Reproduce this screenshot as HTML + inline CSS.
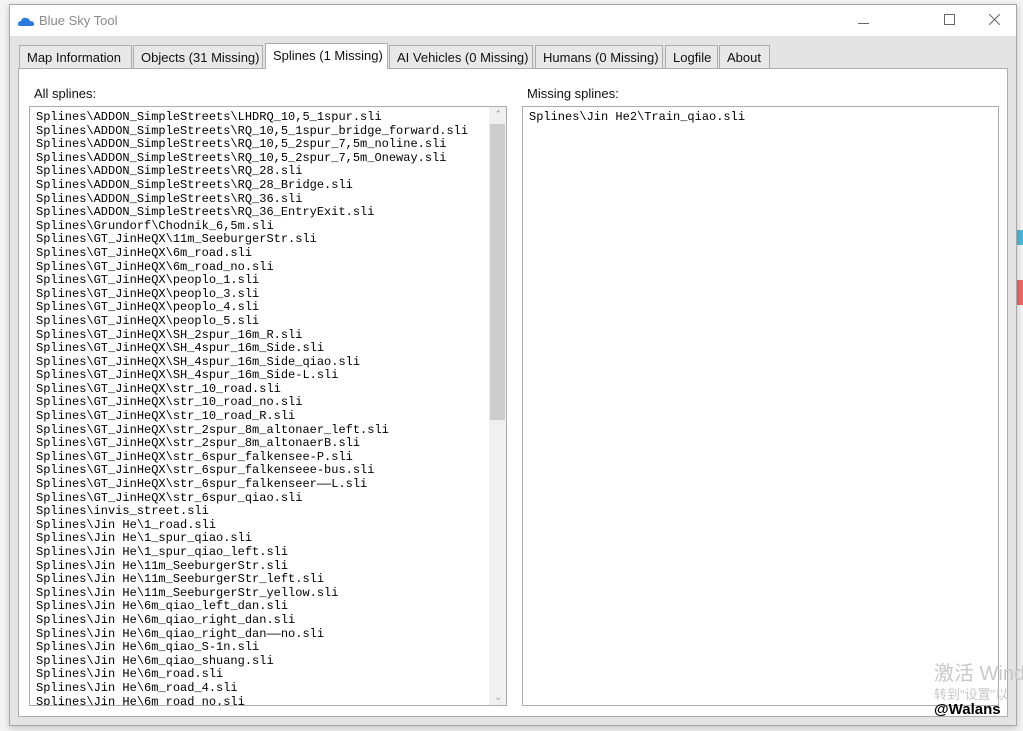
<!DOCTYPE html><html><head><style>
body{margin:0;width:1023px;height:731px;background:#f3f3f3;position:relative;overflow:hidden;font-family:"Liberation Sans","Noto Sans CJK SC",sans-serif}
.win{position:absolute;left:9px;top:4px;width:1006px;height:720px;border:1px solid #a8a8a8;background:#e4e4e4;box-shadow:0 2px 6px rgba(0,0,0,.2)}
.title{position:absolute;left:0;top:0;right:0;height:31px;background:#fff}
.title span{position:absolute;left:29px;top:8px;font-size:13px;color:#8a8a8a}
.tab{position:absolute;top:40px;height:23px;border:1px solid #adadad;border-bottom:none;background:#e8e8e8;font-size:13px;color:#111;box-sizing:border-box;padding:4px 0 0 7px;white-space:nowrap}
.tab.sel{background:#fff;top:38px;height:26px;padding-top:4px;z-index:2}
.panel{position:absolute;left:8px;top:63px;width:990px;height:649px;background:#fff;border:1px solid #adadad;box-sizing:border-box}
.lbl{position:absolute;font-size:13px;color:#111}
.box{position:absolute;border:1px solid #adadad;background:#fff;overflow:hidden;box-sizing:border-box}
.list{font-family:"Liberation Mono",monospace;font-size:12px;line-height:13.6px;color:#000;padding:4px 0 0 6px;white-space:pre}
.wm{position:absolute;white-space:nowrap;color:#c8c8c8}
</style></head><body>
<div style="position:absolute;left:1016px;top:230px;width:7px;height:15px;background:#4ab8d8"></div>
<div style="position:absolute;left:1016px;top:280px;width:7px;height:25px;background:#e66"></div>
<div class="win">
<div class="title"><svg style="position:absolute;left:8px;top:12px" width="16" height="10"><path d="M2 9 Q0 9 0 7 Q0 4 3 4 Q4 0 8 1 Q11 1 12 4 Q16 4 16 7 Q16 9 14 9Z" fill="#2a7be0"/></svg><span>Blue Sky Tool</span>
<div style="position:absolute;left:848px;top:18px;width:11px;height:1px;background:#666"></div>
<div style="position:absolute;left:934px;top:9px;width:9px;height:9px;border:1px solid #666"></div>
<svg style="position:absolute;left:979px;top:9px" width="11" height="11"><path d="M0 0L11 11M11 0L0 11" stroke="#666"/></svg></div>
<div class="tab" style="left:9px;width:113px">Map Information</div>
<div class="tab" style="left:123px;width:130px">Objects (31 Missing)</div>
<div class="tab sel" style="left:255px;width:123px">Splines (1 Missing)</div>
<div class="tab" style="left:379px;width:144px">AI Vehicles (0 Missing)</div>
<div class="tab" style="left:525px;width:128px">Humans (0 Missing)</div>
<div class="tab" style="left:655px;width:53px">Logfile</div>
<div class="tab" style="left:709px;width:51px">About</div>
<div class="panel">
<div class="lbl" style="left:15px;top:17px">All splines:</div>
<div class="lbl" style="left:508px;top:17px">Missing splines:</div>
<div class="box" style="left:10px;top:37px;width:478px;height:600px">
<div class="list">Splines\ADDON_SimpleStreets\LHDRQ_10,5_1spur.sli
Splines\ADDON_SimpleStreets\RQ_10,5_1spur_bridge_forward.sli
Splines\ADDON_SimpleStreets\RQ_10,5_2spur_7,5m_noline.sli
Splines\ADDON_SimpleStreets\RQ_10,5_2spur_7,5m_Oneway.sli
Splines\ADDON_SimpleStreets\RQ_28.sli
Splines\ADDON_SimpleStreets\RQ_28_Bridge.sli
Splines\ADDON_SimpleStreets\RQ_36.sli
Splines\ADDON_SimpleStreets\RQ_36_EntryExit.sli
Splines\Grundorf\Chodnik_6,5m.sli
Splines\GT_JinHeQX\11m_SeeburgerStr.sli
Splines\GT_JinHeQX\6m_road.sli
Splines\GT_JinHeQX\6m_road_no.sli
Splines\GT_JinHeQX\peoplo_1.sli
Splines\GT_JinHeQX\peoplo_3.sli
Splines\GT_JinHeQX\peoplo_4.sli
Splines\GT_JinHeQX\peoplo_5.sli
Splines\GT_JinHeQX\SH_2spur_16m_R.sli
Splines\GT_JinHeQX\SH_4spur_16m_Side.sli
Splines\GT_JinHeQX\SH_4spur_16m_Side_qiao.sli
Splines\GT_JinHeQX\SH_4spur_16m_Side-L.sli
Splines\GT_JinHeQX\str_10_road.sli
Splines\GT_JinHeQX\str_10_road_no.sli
Splines\GT_JinHeQX\str_10_road_R.sli
Splines\GT_JinHeQX\str_2spur_8m_altonaer_left.sli
Splines\GT_JinHeQX\str_2spur_8m_altonaerB.sli
Splines\GT_JinHeQX\str_6spur_falkensee-P.sli
Splines\GT_JinHeQX\str_6spur_falkenseee-bus.sli
Splines\GT_JinHeQX\str_6spur_falkenseer——L.sli
Splines\GT_JinHeQX\str_6spur_qiao.sli
Splines\invis_street.sli
Splines\Jin He\1_road.sli
Splines\Jin He\1_spur_qiao.sli
Splines\Jin He\1_spur_qiao_left.sli
Splines\Jin He\11m_SeeburgerStr.sli
Splines\Jin He\11m_SeeburgerStr_left.sli
Splines\Jin He\11m_SeeburgerStr_yellow.sli
Splines\Jin He\6m_qiao_left_dan.sli
Splines\Jin He\6m_qiao_right_dan.sli
Splines\Jin He\6m_qiao_right_dan——no.sli
Splines\Jin He\6m_qiao_S-1n.sli
Splines\Jin He\6m_qiao_shuang.sli
Splines\Jin He\6m_road.sli
Splines\Jin He\6m_road_4.sli
Splines\Jin He\6m_road_no.sli</div>
<div style="position:absolute;right:0;top:0;width:17px;height:598px;background:#f0f0f0"></div>
<div style="position:absolute;right:1px;top:17px;width:15px;height:296px;background:#cdcdcd"></div>
<div style="position:absolute;right:4px;top:2px;font-size:9px;color:#999">&#8963;</div>
<div style="position:absolute;right:4px;bottom:2px;font-size:9px;color:#999">&#8964;</div>
</div>
<div class="box" style="left:503px;top:37px;width:477px;height:600px"><div class="list">Splines\Jin He2\Train_qiao.sli</div></div>
</div>
</div>
<div class="wm" style="left:934px;top:657px;font-size:20px">激活 Wind</div>
<div class="wm" style="left:934px;top:684px;font-size:13px">转到"设置"以</div>
<div style="position:absolute;left:934px;top:701px;font-size:15px;font-weight:bold;color:#000;white-space:nowrap">@Walans</div>
</body></html>
